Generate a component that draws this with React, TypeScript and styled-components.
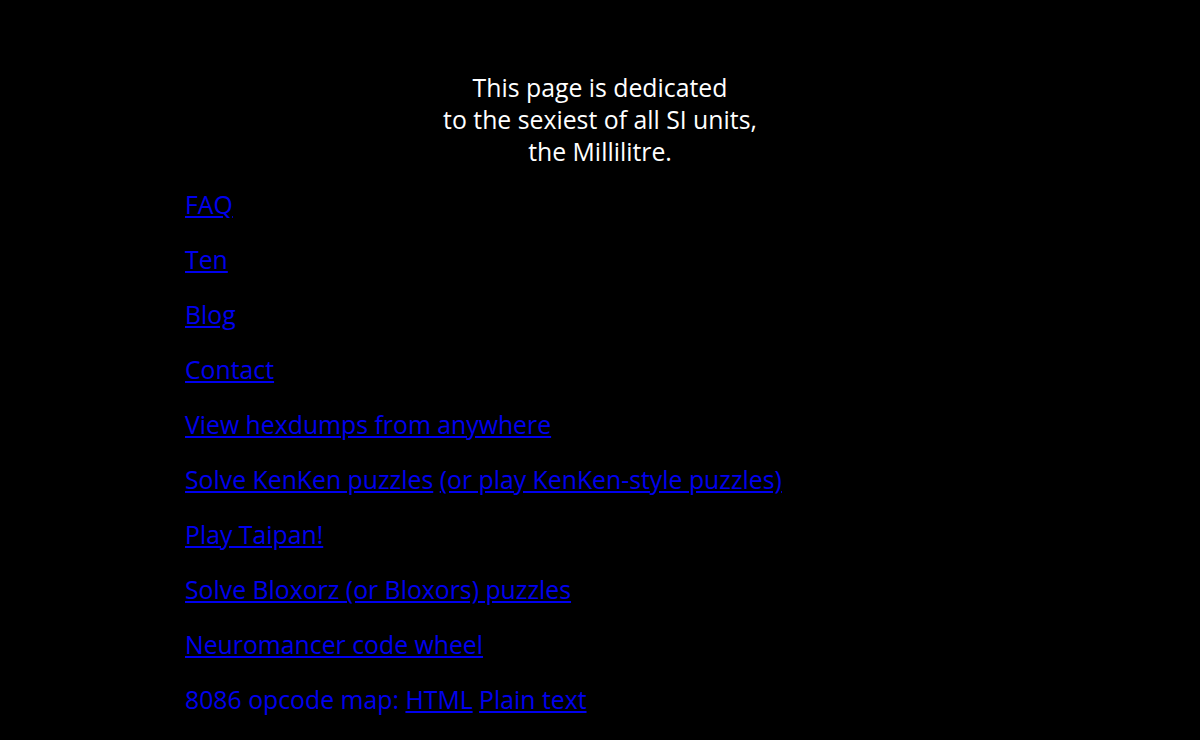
import React from "react";
import styled, { createGlobalStyle } from "styled-components";

const Global = createGlobalStyle`
  html, body { margin: 0; padding: 0; background: #000; }
  body { font-family: "Open Sans", "Noto Sans", sans-serif; }
  * { box-sizing: border-box; }
`;

const Page = styled.div`
  height: 740px;
  overflow: hidden;
  background: #000;
  color: #0000ee;
  font-size: 24.8px;
  line-height: 32px;
  padding-top: 71px;
`;

const Dedication = styled.div`
  color: #fff;
  text-align: center;
  margin: 0 0 21px;
`;

const List = styled.div`
  padding-left: 185px;
  display: flex;
  flex-direction: column;
  gap: 23px;
`;

const Item = styled.p`
  margin: 0;
  color: #0000ee;
`;

const Link = styled.a`
  color: #0000ee;
  text-decoration: underline;
`;

export default function App() {
  return (
    <>
      <Global />
      <Page>
        <Dedication>
          This page is dedicated
          <br />
          to the sexiest of all SI units,
          <br />
          the Millilitre.
        </Dedication>
        <List>
          <Item><Link href="#">FAQ</Link></Item>
          <Item><Link href="#">Ten</Link></Item>
          <Item><Link href="#">Blog</Link></Item>
          <Item><Link href="#">Contact</Link></Item>
          <Item><Link href="#">View hexdumps from anywhere</Link></Item>
          <Item>
            <Link href="#">Solve KenKen puzzles</Link>{" "}
            <Link href="#">(or play KenKen-style puzzles)</Link>
          </Item>
          <Item><Link href="#">Play Taipan!</Link></Item>
          <Item><Link href="#">Solve Bloxorz (or Bloxors) puzzles</Link></Item>
          <Item><Link href="#">Neuromancer code wheel</Link></Item>
          <Item>
            8086 opcode map: <Link href="#">HTML</Link>{" "}
            <Link href="#">Plain text</Link>
          </Item>
        </List>
      </Page>
    </>
  );
}
